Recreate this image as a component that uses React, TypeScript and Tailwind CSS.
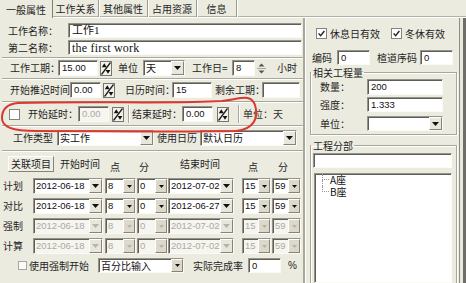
import type { ReactNode } from "react";
import clsx from "clsx";

const cjk = "font-['Noto_Sans_CJK_SC',sans-serif]";
const num = "font-['Liberation_Sans','Noto_Sans_CJK_SC',sans-serif]";
const serif = "font-['Liberation_Serif','Noto_Sans_CJK_SC',serif]";

const sunken =
  "border border-t-[#96948a] border-l-[#96948a] border-b-[#fbfaf4] border-r-[#fbfaf4] shadow-[inset_1px_1px_0_#5e5d57]";
const raised =
  "border border-t-white border-l-white border-b-[#85837a] border-r-[#85837a]";

function Label({ children, className }: { children: ReactNode; className?: string }) {
  return (
    <span className={clsx("shrink-0 whitespace-nowrap text-[10px] leading-none text-[#1e1e1e]", className)}>
      {children}
    </span>
  );
}

function Row({ children, className }: { children: ReactNode; className?: string }) {
  return <div className={clsx("flex shrink-0 items-center", className)}>{children}</div>;
}

function Sep({ className }: { className?: string }) {
  return <div className={clsx("h-[2px] shrink-0 border-t border-t-[#a9a79c] border-b border-b-white", className)} />;
}

function VSep({ className }: { className?: string }) {
  return <div className={clsx("h-[18px] w-[2px] shrink-0 border-l border-l-[#a9a79c] border-r border-r-white", className)} />;
}

function Field({
  children,
  className,
  disabled,
}: {
  children?: ReactNode;
  className?: string;
  disabled?: boolean;
}) {
  return (
    <div
      className={clsx(
        "flex h-full shrink-0 items-center overflow-hidden whitespace-nowrap pl-[3px] text-[9.5px] leading-none",
        sunken,
        num,
        disabled ? "bg-[#f6f5f0] text-[#acaaa1]" : "bg-white text-[#111]",
        className
      )}
    >
      {children}
    </div>
  );
}

function DropBtn({ disabled, small }: { disabled?: boolean; small?: boolean }) {
  return (
    <div
      className={clsx(
        "flex shrink-0 items-center justify-center",
        small ? "w-[12px] bg-[#dcd9cb]" : "w-[13px] bg-[#e9e7dc]",
        raised
      )}
    >
      <svg width={small ? 5 : 7} height={small ? 3 : 4} viewBox="0 0 7 4">
        <path d="M0 0h7L3.5 4z" fill={disabled ? "#b5b3aa" : "#111"} />
      </svg>
    </div>
  );
}

function Combo({
  value,
  className,
  disabled,
  small,
  cn,
}: {
  value: string;
  className?: string;
  disabled?: boolean;
  small?: boolean;
  cn?: boolean;
}) {
  return (
    <div
      className={clsx(
        "flex h-full shrink-0 overflow-hidden",
        sunken,
        disabled ? "bg-[#f6f5f0] text-[#acaaa1]" : "bg-white text-[#111]",
        className
      )}
    >
      <span
        className={clsx(
          "flex min-w-0 flex-1 items-center overflow-hidden whitespace-nowrap pl-[2px] leading-none",
          cn ? "text-[10px]" : "text-[9.5px]",
          cn ? cjk : num
        )}
      >
        {value}
      </span>
      <DropBtn disabled={disabled} small={small} />
    </div>
  );
}

function DiagSpin({ className }: { className?: string }) {
  return (
    <svg width="12" height="15" viewBox="0 0 12 15" className={clsx("shrink-0", className)}>
      <rect x="0.5" y="0.5" width="11" height="14" fill="#f3f2ea" stroke="#77756d" />
      <path d="M1.5 13.5 L10.5 1.5" stroke="#1c1c1c" strokeWidth="1.3" />
      <path d="M1.8 6.2 L4.3 2.2 L6.8 6.2Z" fill="#111" />
      <path d="M5.6 9 L10.4 9 L8 12.8Z" fill="#111" />
    </svg>
  );
}

function UpDown() {
  return (
    <svg width="13" height="15" viewBox="0 0 13 15" className="shrink-0">
      <path d="M3.5 5.5 L6.5 2.5 L9.5 5.5Z" fill="#555" />
      <path d="M2 7.5h9" stroke="#a8a69c" />
      <path d="M3.5 9.5 L6.5 12.5 L9.5 9.5Z" fill="#555" />
    </svg>
  );
}

function Check({ checked, className }: { checked?: boolean; className?: string }) {
  return (
    <div
      className={clsx(
        "flex h-[11px] w-[11px] shrink-0 items-center justify-center border border-[#85837b] bg-white",
        className
      )}
    >
      {checked && (
        <svg width="7" height="7" viewBox="0 0 7 7">
          <path d="M0.6 3.4 L2.6 5.6 L6.4 1" fill="none" stroke="#222" strokeWidth="1.4" />
        </svg>
      )}
    </div>
  );
}

function Tab({ children, className }: { children: ReactNode; className?: string }) {
  return (
    <div
      className={clsx(
        "flex h-full shrink-0 items-center justify-center border-r border-r-[#9c9a90] text-[10px] leading-none shadow-[1px_0_0_#fff]",
        className
      )}
    >
      {children}
    </div>
  );
}

function Tabs() {
  return (
    <div className="flex h-[18px] shrink-0">
      <div className="flex w-[53px] shrink-0 items-center justify-center border-r border-r-[#7e7c73] pt-px text-[10px] leading-none">
        一般属性
      </div>
      <div className="flex flex-1 border-b border-b-white shadow-[0_-1px_0_#b3b1a6_inset]">
        <Tab className="w-[46px]">工作关系</Tab>
        <Tab className="w-[49px]">其他属性</Tab>
        <Tab className="w-[49px]">占用资源</Tab>
        <Tab className="w-[40px]">信息</Tab>
      </div>
    </div>
  );
}

type TimeRow = {
  label: string;
  start: string;
  end: string;
  h1: string;
  m1: string;
  h2: string;
  m2: string;
  disabled?: boolean;
};

const timeRows: TimeRow[] = [
  { label: "计划", start: "2012-06-18", h1: "8", m1: "0", end: "2012-07-02", h2: "15", m2: "59" },
  { label: "对比", start: "2012-06-18", h1: "8", m1: "0", end: "2012-06-27", h2: "15", m2: "59" },
  { label: "强制", start: "2012-06-18", h1: "8", m1: "0", end: "2012-07-02", h2: "15", m2: "59", disabled: true },
  { label: "计算", start: "2012-06-18", h1: "8", m1: "0", end: "2012-07-02", h2: "15", m2: "59", disabled: true },
];

function LeftPanel() {
  return (
    <div className="flex w-[303px] shrink-0 flex-col">
      <Row className="mt-[5px] h-[15px] pl-[8px]">
        <Label className="w-[60px]">工作名称：</Label>
        <Field className="w-[234px]">
          <span className={clsx("text-[11px]", serif)}>工作1</span>
        </Field>
      </Row>
      <Row className="mt-[2px] h-[15px] pl-[8px]">
        <Label className="w-[60px]">第二名称：</Label>
        <Field className="w-[234px]">
          <span className={clsx("text-[12px] tracking-[0.2px]", serif)}>the first work</span>
        </Field>
      </Row>
      <Sep className="mt-[2px] ml-[2px]" />

      <Row className="mt-[1px] h-[16px] pl-[10px]">
        <Label className="w-[48px]">工作工期：</Label>
        <Field className="w-[40px]">15.00</Field>
        <DiagSpin className="ml-[2px]" />
        <Label className="ml-[6px] w-[25px]">单位</Label>
        <Combo className="w-[42px]" value="天" cn />
        <Label className="ml-[7px] w-[40px]">工作日=</Label>
        <Field className="w-[23px]">8</Field>
        <UpDown />
        <Label className="ml-[9px]">小时</Label>
      </Row>
      <Sep className="mt-[2px] ml-[2px]" />

      <Row className="mt-[2px] h-[16px] pl-[10px]">
        <Label className="w-[60px]">开始推迟时间</Label>
        <Field className="w-[31px]">0.00</Field>
        <DiagSpin className="ml-[2px]" />
        <Label className="ml-[10px] w-[47px]">日历时间：</Label>
        <Field className="w-[40px]">15</Field>
        <Label className="ml-[3px] w-[47px]">剩余工期：</Label>
        <Field className="w-[38px]" />
      </Row>
      <Sep className="mt-[3px] ml-[2px]" />

      <Row className="mt-[3px] h-[16px] pl-[9px]">
        <Check />
        <Label className="ml-[8px] w-[50px]">开始延时：</Label>
        <Field className="w-[31px]" disabled>
          0.00
        </Field>
        <DiagSpin className="ml-[3px]" />
        <VSep className="ml-[4px]" />
        <Label className="ml-[2px] w-[50px]">结束延时：</Label>
        <Field className="w-[31px]">0.00</Field>
        <DiagSpin className="ml-[4px]" />
        <VSep className="ml-[9px]" />
        <Label className="ml-[3px] text-[#333]">单位：天</Label>
      </Row>
      <Sep className="mt-[3px] ml-[2px]" />

      <Row className="mt-[3px] h-[16px] pl-[13px]">
        <Label className="w-[44px]">工作类型</Label>
        <Combo className="w-[97px]" value="实工作" cn />
        <Label className="ml-[3px] w-[43px]">使用日历</Label>
        <Combo className="w-[97px]" value="默认日历" cn />
      </Row>
      <Sep className="mt-[4px] ml-[2px]" />

      <Row className="mt-[4px] h-[16px] pl-[8px]">
        <div
          className={clsx(
            "flex h-full w-[46px] shrink-0 items-center justify-center bg-[#efeee5] text-[10px] leading-none",
            raised
          )}
        >
          关联项目
        </div>
        <Label className="ml-[6px] w-[50px]">开始时间</Label>
        <Label className="w-[29px] pt-[6px]">点</Label>
        <Label className="w-[41px] pt-[6px]">分</Label>
        <Label className="w-[68px]">结束时间</Label>
        <Label className="w-[30px] pt-[6px]">点</Label>
        <Label className="pt-[6px]">分</Label>
      </Row>

      {timeRows.map((r, i) => (
        <Row key={r.label} className={clsx("h-[16px] pl-[3px]", i === 0 ? "mt-[6px]" : "mt-[4px]")}>
          <Label className="w-[30px]">{r.label}</Label>
          <Combo className="w-[70px]" value={r.start} disabled={r.disabled} />
          <Combo className="ml-[2px] w-[31px]" value={r.h1} disabled={r.disabled} small />
          <Combo className="ml-[1px] w-[31px]" value={r.m1} disabled={r.disabled} small />
          <Combo className="w-[66px]" value={r.end} disabled={r.disabled} />
          <Combo className="ml-[8px] w-[29px]" value={r.h2} disabled={r.disabled} small />
          <Combo className="ml-[1px] w-[29px]" value={r.m2} disabled={r.disabled} small />
        </Row>
      ))}

      <Row className="mt-[4px] h-[15px] pl-[18px]">
        <div className="h-[9px] w-[9px] shrink-0 border border-[#a9a79d] bg-[#fbfbf8]" />
        <Label className="ml-[2px] w-[69px]">使用强制开始</Label>
        <Combo className="w-[86px]" value="百分比输入" cn small />
        <Label className="ml-[9px] w-[55px]">实际完成率</Label>
        <Field className="w-[33px]">0</Field>
        <Label className={clsx("ml-[7px] text-[9px]", num)}>%</Label>
      </Row>
    </div>
  );
}

function TreeRow({ children, last }: { children: ReactNode; last?: boolean }) {
  return (
    <div className="flex h-[12px] items-stretch">
      <div className="ml-[7px] flex w-[7px] shrink-0 flex-col">
        <div className="h-[6px] border-l border-b border-dotted border-[#9a988f]" />
        <div className={clsx("flex-1", !last && "border-l border-dotted border-[#9a988f]")} />
      </div>
      <span className="ml-[1px] flex items-center whitespace-nowrap text-[10px] leading-none">{children}</span>
    </div>
  );
}

function RightPanel() {
  return (
    <div className="flex w-[155px] shrink-0 flex-col border-l-2 border-l-[#a9a79c] shadow-[inset_1px_0_0_#fff]">
      <Row className="mt-[10px] h-[11px] pl-[11px]">
        <Check checked />
        <Label className="ml-[3px]">休息日有效</Label>
        <Check checked className="ml-[11px]" />
        <Label className="ml-[3px]">冬休有效</Label>
      </Row>
      <Row className="mt-[11px] h-[15px] pl-[7px]">
        <Label className="w-[25px]">编码</Label>
        <Field className="w-[33px]">0</Field>
        <Label className="ml-[7px] w-[43px]">楦道序码</Label>
        <Field className="w-[33px]">0</Field>
      </Row>

      <fieldset className="ml-[5px] mt-[2px] w-[147px] border border-[#a9a79c] pb-[3px] shadow-[inset_1px_1px_0_#fff,1px_1px_0_#fff]">
        <legend className="pl-[2px] pr-[1px] text-[10px] leading-[11px]">相关工程量</legend>
        <Row className="mt-[1px] h-[16px] pl-[9px]">
          <Label className="w-[47px]">数量：</Label>
          <Field className="w-[76px]">200</Field>
        </Row>
        <Row className="mt-[2px] h-[15px] pl-[9px]">
          <Label className="w-[47px]">强度：</Label>
          <Field className="w-[76px]">1.333</Field>
        </Row>
        <Row className="mt-[4px] h-[15px] pl-[9px]">
          <Label className="w-[47px]">单位：</Label>
          <Combo className="w-[76px]" value="" />
        </Row>
      </fieldset>

      <fieldset className="ml-[5px] mt-[5px] flex min-h-0 w-[147px] flex-1 flex-col border border-b-0 border-[#a9a79c] shadow-[inset_1px_1px_0_#fff,1px_0_0_#fff]">
        <legend className="pl-[2px] pr-[1px] text-[10px] leading-[11px]">工程分部</legend>
        <Field className="ml-[2px] mt-[2px] !h-[15px] w-[139px]" />
        <div className={clsx("ml-[3px] mt-[5px] h-[120px] w-[138px] bg-white pt-0 text-[#111]", sunken)}>
          <TreeRow>A座</TreeRow>
          <TreeRow last>B座</TreeRow>
        </div>
      </fieldset>
    </div>
  );
}

function Edge() {
  return (
    <div className="flex flex-1">
      <div className="w-[1px] bg-[#ecebe0]" />
      <div className="w-[1px] bg-[#8f8d85]" />
      <div className="w-[3px] bg-[#e9e8dd]" />
      <div className="w-[3px] bg-[#6e6d67]" />
    </div>
  );
}

function RedMark() {
  return (
    <svg className="pointer-events-none absolute left-0 top-0" width="466" height="283">
      <path
        d="M18 103 C 90 101, 180 104, 222 101 C 240 99, 251 93, 255 105 C 259 118, 254 129, 236 131 C 180 132, 90 131, 36 131 C 12 131, 2 127, 2 118 C 2 109, 7 104, 18 103 Z"
        fill="none"
        stroke="#d83a33"
        strokeWidth="2"
      />
    </svg>
  );
}

export default function App() {
  return (
    <div
      className={clsx(
        "relative flex h-[283px] w-[466px] flex-col overflow-hidden bg-[#ecebe0] text-[#1e1e1e]",
        cjk
      )}
    >
      <Tabs />
      <div className="flex min-h-0 flex-1">
        <LeftPanel />
        <RightPanel />
        <Edge />
      </div>
      <RedMark />
    </div>
  );
}
